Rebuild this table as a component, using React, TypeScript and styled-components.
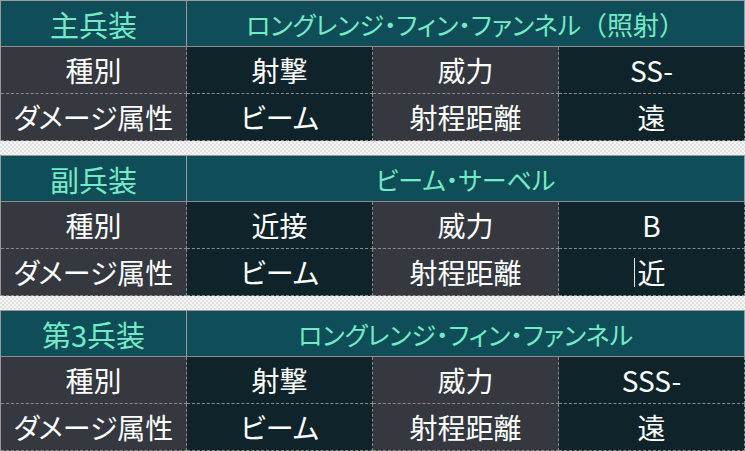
import React from 'react';
import styled, { createGlobalStyle, css } from 'styled-components';

type Row = {
  label: string;
  value: string;
  label2: string;
  value2: string;
  caret?: boolean;
};

type Weapon = {
  slot: string;
  name: string;
  rows: Row[];
};

const weapons: Weapon[] = [
  {
    slot: '主兵装',
    name: 'ロングレンジ・フィン・ファンネル（照射）',
    rows: [
      { label: '種別', value: '射撃', label2: '威力', value2: 'SS-' },
      { label: 'ダメージ属性', value: 'ビーム', label2: '射程距離', value2: '遠' },
    ],
  },
  {
    slot: '副兵装',
    name: 'ビーム・サーベル',
    rows: [
      { label: '種別', value: '近接', label2: '威力', value2: 'B' },
      { label: 'ダメージ属性', value: 'ビーム', label2: '射程距離', value2: '近', caret: true },
    ],
  },
  {
    slot: '第3兵装',
    name: 'ロングレンジ・フィン・ファンネル',
    rows: [
      { label: '種別', value: '射撃', label2: '威力', value2: 'SSS-' },
      { label: 'ダメージ属性', value: 'ビーム', label2: '射程距離', value2: '遠' },
    ],
  },
];

const GlobalStyle = createGlobalStyle`
  html, body {
    margin: 0;
    padding: 0;
  }
  body {
    width: 745px;
    height: 451px;
    overflow: hidden;
    background: repeating-conic-gradient(#e2e2e2 0 25%, #f7f7f7 0 50%) 0 0 / 4px 4px;
    font-family: "Noto Sans CJK JP", "Noto Sans", sans-serif;
    font-feature-settings: "palt";
  }
`;

const Page = styled.div`
  display: flex;
  flex-direction: column;
  gap: 14px;
  width: 745px;
`;

const Table = styled.div`
  display: grid;
  grid-template-columns: repeat(4, 1fr);
  grid-template-rows: 47px 47px 47px;
  border-left: 1px solid #9a9a9a;
`;

const HeadCell = styled.div<{ $wide?: boolean }>`
  ${({ $wide }) =>
    $wide &&
    css`
      grid-column: span 3;
    `}
  display: flex;
  align-items: center;
  justify-content: center;
  background: #0f4e58;
  color: #74ebc6;
  font-size: ${({ $wide }) => ($wide ? '25px' : '29px')};
  border-top: 1px solid #9a9a9a;
  border-right: 1px solid #9a9a9a;
  border-bottom: 1px solid #8c8c8c;
  white-space: nowrap;
`;

// full-width brackets keep their em width, as in the original
const Bracket = styled.span`
  font-feature-settings: normal;
  font-size: 26px;
`;

const Cell = styled.div<{ $kind: 'label' | 'value' }>`
  display: flex;
  align-items: center;
  justify-content: center;
  background: ${({ $kind }) => ($kind === 'label' ? '#35383f' : '#0f242a')};
  color: #ffffff;
  font-size: 28px;
  border-right: 1px dashed #8a8a8a;
  border-bottom: 1px dashed #8a8a8a;
  white-space: nowrap;
`;

const Caret = styled.span`
  display: inline-block;
  width: 1px;
  height: 29px;
  margin-left: -3px;
  margin-right: 2px;
  background: #e8e8e8;
`;

const renderName = (name: string) =>
  name.split(/(（.*?）)/).map((part, i) =>
    part.startsWith('（') ? <Bracket key={i}>{part}</Bracket> : part
  );

export default function App() {
  return (
    <>
      <GlobalStyle />
      <Page>
        {weapons.map((w) => (
          <Table key={w.slot}>
            <HeadCell>{w.slot}</HeadCell>
            <HeadCell $wide>{renderName(w.name)}</HeadCell>
            {w.rows.map((r) => (
              <React.Fragment key={r.label}>
                <Cell $kind="label">{r.label}</Cell>
                <Cell $kind="value">{r.value}</Cell>
                <Cell $kind="label">{r.label2}</Cell>
                <Cell $kind="value">
                  {r.caret && <Caret />}
                  {r.value2}
                </Cell>
              </React.Fragment>
            ))}
          </Table>
        ))}
      </Page>
    </>
  );
}
